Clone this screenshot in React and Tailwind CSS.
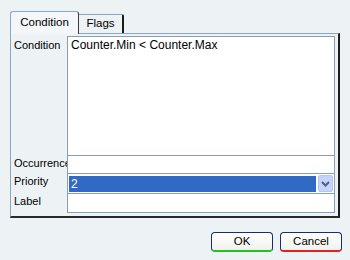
import React from "react";

const Field = ({ label, children, className = "" }) => (
  <div className={`flex -mt-px ${className}`}>
    <div className="w-[56px] pl-[3px] pt-[1px] leading-[14px] whitespace-nowrap">{label}</div>
    <div className="flex-1 border border-[#869fb6] bg-white">{children}</div>
  </div>
);

const Button = ({ children, stripe }) => (
  <button
    className={`w-[62px] h-[20px] rounded-[4px] border border-[#1b2c6b] border-b-2 ${stripe} bg-gradient-to-b from-white to-[#f1f1ee] text-[11.5px] leading-none text-black`}
  >
    {children}
  </button>
);

export default function App() {
  return (
    <div className="w-[350px] h-[260px] bg-[#edf2f5] font-['Liberation_Sans',sans-serif] text-[11px] text-black">
      <div className="pl-[10px] pt-[10px]">
        <div className="flex items-end h-[23px]">
          <div className="relative z-10 w-[69px] h-[23px] -mb-px border border-b-0 border-[#8ea6b9] border-r-[#3a3a3a] rounded-t-[3px] bg-[#f3f7f9] flex items-center justify-center text-[11.5px]">
            Condition
          </div>
          <div className="w-[45px] h-[19px] border-t border-[#8ea6b9] border-r-2 border-r-[#1a1a1a] rounded-tr-[2px] flex items-center justify-center text-[11.5px]">
            Flags
          </div>
        </div>
        <div className="w-[330px] h-[185px] border-l border-t border-[#8ea6b9] border-r-2 border-r-[#1e1e1e] border-b-2 border-b-[#2a2a2a] pt-[2px] pr-[3px]">
          <div className="flex">
            <div className="w-[56px] pl-[3px] pt-[2px] leading-[14px]">Condition</div>
            <div className="flex-1 h-[120px] border border-[#869fb6] bg-white px-[3px] pt-[1px] leading-[15px] text-[12px]">
              Counter.Min &lt; Counter.Max
            </div>
          </div>
          <Field label="Occurrence">
            <div className="h-[17px]" />
          </Field>
          <Field label="Priority">
            <div className="h-[19px] flex items-center pl-[1px] pr-[1px] gap-[2px]">
              <div className="flex-1 h-[16px] bg-[#316ac5] text-white pl-[2px] leading-[16px] text-[12px]">2</div>
              <div className="w-[15px] h-[17px] rounded-[2px] bg-[#c6d4fa] border border-[#b5c6f2] flex items-center justify-center">
                <svg width="9" height="6" viewBox="0 0 9 6">
                  <path d="M1 1 L4.5 4.5 L8 1" fill="none" stroke="#4d6185" strokeWidth="2" />
                </svg>
              </div>
            </div>
          </Field>
          <Field label="Label">
            <div className="h-[18px]" />
          </Field>
        </div>
      </div>
      <div className="flex justify-end gap-[7px] pr-[8px] mt-[14px]">
        <Button stripe="border-b-[#1fc21f]">OK</Button>
        <Button stripe="border-b-[#e0211d]">Cancel</Button>
      </div>
    </div>
  );
}
